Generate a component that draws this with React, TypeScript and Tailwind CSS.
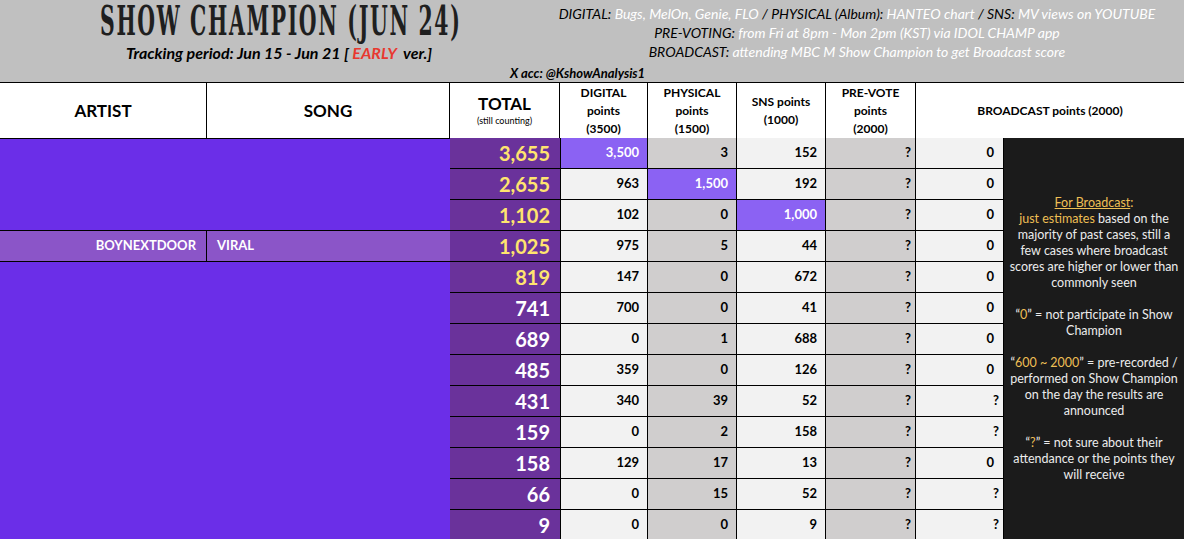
const rows = [
  { total: '3,655', digital: '3,500', physical: '3', sns: '152', bc: '0', hi: 'd', yellow: true },
  { total: '2,655', digital: '963', physical: '1,500', sns: '192', bc: '0', hi: 'p', yellow: true },
  { total: '1,102', digital: '102', physical: '0', sns: '1,000', bc: '0', hi: 's', yellow: true },
  { total: '1,025', digital: '975', physical: '5', sns: '44', bc: '0', hi: '', yellow: true },
  { total: '819', digital: '147', physical: '0', sns: '672', bc: '0', hi: '', yellow: true },
  { total: '741', digital: '700', physical: '0', sns: '41', bc: '0', hi: '', yellow: false },
  { total: '689', digital: '0', physical: '1', sns: '688', bc: '0', hi: '', yellow: false },
  { total: '485', digital: '359', physical: '0', sns: '126', bc: '0', hi: '', yellow: false },
  { total: '431', digital: '340', physical: '39', sns: '52', bc: '?', hi: '', yellow: false },
  { total: '159', digital: '0', physical: '2', sns: '158', bc: '?', hi: '', yellow: false },
  { total: '158', digital: '129', physical: '17', sns: '13', bc: '0', hi: '', yellow: false },
  { total: '66', digital: '0', physical: '15', sns: '52', bc: '?', hi: '', yellow: false },
  { total: '9', digital: '0', physical: '0', sns: '9', bc: '?', hi: '', yellow: false },
];

const num = 'flex items-center justify-end pr-2 text-[13px] font-bold border-r border-b border-black';
const head = 'flex flex-col items-center justify-center text-center font-bold bg-white border-r border-black text-[12px] leading-[18px]';

function Gold({ children }: { children: React.ReactNode }) {
  return <span className="text-[#eebf55]">{children}</span>;
}

export default function App() {
  return (
    <div className="w-[1184px] h-[539px] overflow-hidden bg-white" style={{ fontFamily: 'Lato, "Open Sans", sans-serif' }}>
      {/* header band */}
      <div className="h-[82px] bg-[#c0c0c0] flex flex-col">
        <div className="flex h-[64px]">
          <div className="w-[558px] flex flex-col items-center pt-[1px]">
            <div className="w-full h-[40px] pl-[100px]">
              <span
                className="inline-block origin-left text-[41px] leading-[40px] font-bold text-[#1f1f1f] tracking-[3px] scale-x-[0.553] whitespace-nowrap"
                style={{ fontFamily: '"DejaVu Serif Condensed", "DejaVu Serif", serif' }}
              >
                SHOW CHAMPION (JUN 24)
              </span>
            </div>
            <div className="text-[16px] font-bold italic text-black whitespace-nowrap">
              Tracking period: Jun 15 - Jun 21 [ <span className="text-[#e8382f]">EARLY</span>&nbsp; ver.]
            </div>
          </div>
          <div className="flex-1 pr-[28px] pt-[4px] flex flex-col items-center text-[14px] italic leading-[19px] whitespace-nowrap">
            <div>
              <span className="text-black">DIGITAL:</span> <span className="text-white">Bugs, MelOn, Genie, FLO</span> <span className="text-black">/ PHYSICAL (Album):</span>{' '}
              <span className="text-white">HANTEO chart</span> <span className="text-black">/ SNS:</span> <span className="text-white">MV views on YOUTUBE</span>
            </div>
            <div>
              <span className="text-black">PRE-VOTING:</span> <span className="text-white">from Fri at 8pm - Mon 2pm (KST) via IDOL CHAMP app</span>
            </div>
            <div>
              <span className="text-black">BROADCAST:</span> <span className="text-white">attending MBC M Show Champion to get Broadcast score</span>
            </div>
          </div>
        </div>
        <div className="pl-[510px] text-[13px] font-bold italic text-black leading-[18px]">X acc: @KshowAnalysis1</div>
      </div>

      {/* table */}
      <div className="grid grid-cols-[207px_243px_110px_88px_89px_89px_90px_88px_180px] grid-rows-[55px_repeat(13,31px)] border-t border-black text-black">
        <div className={`${head} text-[17px]`}>ARTIST</div>
        <div className={`${head} text-[17px]`}>SONG</div>
        <div className={head}>
          <span className="text-[17px] leading-[20px]">TOTAL</span>
          <span className="text-[9px] font-normal leading-[14px]">(still counting)</span>
        </div>
        <div className={head}>
          <span>DIGITAL</span>
          <span>points</span>
          <span>(3500)</span>
        </div>
        <div className={head}>
          <span>PHYSICAL</span>
          <span>points</span>
          <span>(1500)</span>
        </div>
        <div className={head}>
          <span>SNS points</span>
          <span>(1000)</span>
        </div>
        <div className={head}>
          <span>PRE-VOTE</span>
          <span>points</span>
          <span>(2000)</span>
        </div>
        <div className={`${head} col-span-2 border-r-0`}>BROADCAST points (2000)</div>

        {rows.map((r, i) => (
          <Row key={i} r={r} i={i} />
        ))}
      </div>
    </div>
  );
}

function Row({ r, i }: { r: (typeof rows)[number]; i: number }) {
  const cellBg = (key: string, base: string) => (r.hi === key ? 'bg-[#8b62f3] text-white' : base);
  return (
    <>
      {i === 0 && <div className="col-span-2 row-span-3 bg-[#6b2ee8] border-t border-black border-b" />}
      {i === 3 && (
        <>
          <div className="bg-[#8b55c8] border-r border-b border-black flex items-center justify-end pr-[10px] text-white text-[13px] font-bold">
            BOYNEXTDOOR
          </div>
          <div className="bg-[#8b55c8] border-b border-black flex items-center pl-[10px] text-white text-[13px] font-bold">VIRAL</div>
        </>
      )}
      {i === 4 && <div className="col-span-2 row-span-9 bg-[#6b2ee8]" />}
      <div
        className={`flex items-center justify-end pr-[10px] text-[20px] font-bold bg-[#6a329b] border-b border-black ${
          r.yellow ? 'text-[#ffe46e]' : 'text-white'
        }`}
      >
        {r.total}
      </div>
      <div className={`${num} border-l ${cellBg('d', 'bg-[#f2f2f2]')}`}>{r.digital}</div>
      <div className={`${num} ${cellBg('p', 'bg-[#d0cece]')}`}>{r.physical}</div>
      <div className={`${num} ${cellBg('s', 'bg-[#f2f2f2]')}`}>{r.sns}</div>
      <div className={`${num} bg-[#d0cece] pr-[4px]`}>?</div>
      <div className={`${num} bg-[#f2f2f2] ${r.bc === '?' ? 'pr-[4px]' : 'pr-[9px]'}`}>{r.bc}</div>
      {i === 0 && (
        <div className="row-span-13 bg-[#1b1b1b] text-[#ececec] text-[12.5px] leading-[16px] text-center pt-[57px] whitespace-nowrap">
          <div>
            <Gold>
              <span className="underline">For Broadcast</span>:
            </Gold>
          </div>
          <div>
            <Gold>just estimates</Gold> based on the
          </div>
          <div>majority of past cases, still a</div>
          <div>few cases where broadcast</div>
          <div>scores are higher or lower than</div>
          <div>commonly seen</div>
          <div className="h-4" />
          <div>
            “<Gold>0</Gold>” = not participate in Show
          </div>
          <div>Champion</div>
          <div className="h-4" />
          <div>
            “<Gold>600 ~ 2000</Gold>” = pre-recorded /
          </div>
          <div>performed on Show Champion</div>
          <div>on the day the results are</div>
          <div>announced</div>
          <div className="h-4" />
          <div>
            “<Gold>?</Gold>” = not sure about their
          </div>
          <div>attendance or the points they</div>
          <div>will receive</div>
        </div>
      )}
    </>
  );
}
